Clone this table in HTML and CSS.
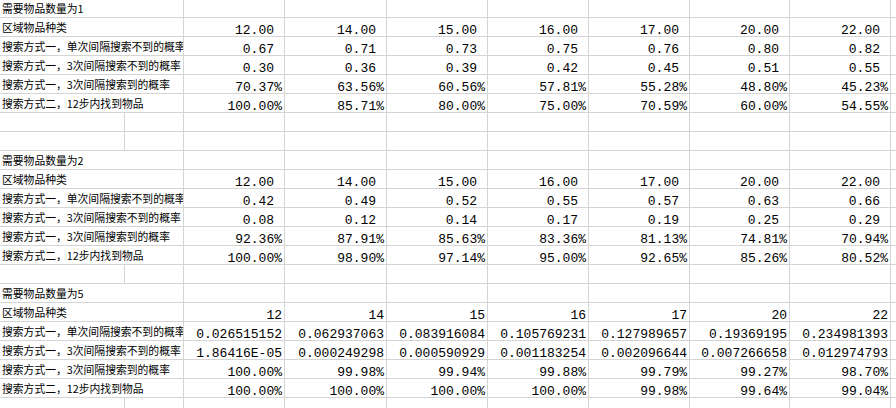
FILE: index.html
```html
<!DOCTYPE html>
<html lang="zh">
<head>
<meta charset="utf-8">
<title>Sheet</title>
<link rel="stylesheet" href="styles.css">
</head>
<body>
<div class="sheet">
  <div class="row"><div class="lbl">需要物品数量为1</div><div class="c"></div><div class="c"></div><div class="c"></div><div class="c"></div><div class="c"></div><div class="c"></div><div class="c"></div><div class="c"></div></div>
  <div class="row"><div class="lbl">区域物品种类</div><div class="c n f">12.00</div><div class="c n f">14.00</div><div class="c n f">15.00</div><div class="c n f">16.00</div><div class="c n f">17.00</div><div class="c n f">20.00</div><div class="c n f">22.00</div><div class="c"></div></div>
  <div class="row"><div class="lbl">搜索方式一，单次间隔搜索不到的概率</div><div class="c n f">0.67</div><div class="c n f">0.71</div><div class="c n f">0.73</div><div class="c n f">0.75</div><div class="c n f">0.76</div><div class="c n f">0.80</div><div class="c n f">0.82</div><div class="c"></div></div>
  <div class="row"><div class="lbl">搜索方式一，3次间隔搜索不到的概率</div><div class="c n f">0.30</div><div class="c n f">0.36</div><div class="c n f">0.39</div><div class="c n f">0.42</div><div class="c n f">0.45</div><div class="c n f">0.51</div><div class="c n f">0.55</div><div class="c"></div></div>
  <div class="row"><div class="lbl">搜索方式一，3次间隔搜索到的概率</div><div class="c n">70.37%</div><div class="c n">63.56%</div><div class="c n">60.56%</div><div class="c n">57.81%</div><div class="c n">55.28%</div><div class="c n">48.80%</div><div class="c n">45.23%</div><div class="c"></div></div>
  <div class="row"><div class="lbl">搜索方式二，12步内找到物品</div><div class="c n">100.00%</div><div class="c n">85.71%</div><div class="c n">80.00%</div><div class="c n">75.00%</div><div class="c n">70.59%</div><div class="c n">60.00%</div><div class="c n">54.55%</div><div class="c"></div></div>
  <div class="row"><div class="c"></div><div class="c"></div><div class="c"></div><div class="c"></div><div class="c"></div><div class="c"></div><div class="c"></div><div class="c"></div><div class="c"></div><div class="c"></div></div>
  <div class="row"><div class="c"></div><div class="c"></div><div class="c"></div><div class="c"></div><div class="c"></div><div class="c"></div><div class="c"></div><div class="c"></div><div class="c"></div><div class="c"></div></div>

  <div class="row"><div class="lbl">需要物品数量为2</div><div class="c"></div><div class="c"></div><div class="c"></div><div class="c"></div><div class="c"></div><div class="c"></div><div class="c"></div><div class="c"></div></div>
  <div class="row"><div class="lbl">区域物品种类</div><div class="c n f">12.00</div><div class="c n f">14.00</div><div class="c n f">15.00</div><div class="c n f">16.00</div><div class="c n f">17.00</div><div class="c n f">20.00</div><div class="c n f">22.00</div><div class="c"></div></div>
  <div class="row"><div class="lbl">搜索方式一，单次间隔搜索不到的概率</div><div class="c n f">0.42</div><div class="c n f">0.49</div><div class="c n f">0.52</div><div class="c n f">0.55</div><div class="c n f">0.57</div><div class="c n f">0.63</div><div class="c n f">0.66</div><div class="c"></div></div>
  <div class="row"><div class="lbl">搜索方式一，3次间隔搜索不到的概率</div><div class="c n f">0.08</div><div class="c n f">0.12</div><div class="c n f">0.14</div><div class="c n f">0.17</div><div class="c n f">0.19</div><div class="c n f">0.25</div><div class="c n f">0.29</div><div class="c"></div></div>
  <div class="row"><div class="lbl">搜索方式一，3次间隔搜索到的概率</div><div class="c n">92.36%</div><div class="c n">87.91%</div><div class="c n">85.63%</div><div class="c n">83.36%</div><div class="c n">81.13%</div><div class="c n">74.81%</div><div class="c n">70.94%</div><div class="c"></div></div>
  <div class="row"><div class="lbl">搜索方式二，12步内找到物品</div><div class="c n">100.00%</div><div class="c n">98.90%</div><div class="c n">97.14%</div><div class="c n">95.00%</div><div class="c n">92.65%</div><div class="c n">85.26%</div><div class="c n">80.52%</div><div class="c"></div></div>
  <div class="row"><div class="c"></div><div class="c"></div><div class="c"></div><div class="c"></div><div class="c"></div><div class="c"></div><div class="c"></div><div class="c"></div><div class="c"></div><div class="c"></div></div>

  <div class="row"><div class="lbl">需要物品数量为5</div><div class="c"></div><div class="c"></div><div class="c"></div><div class="c"></div><div class="c"></div><div class="c"></div><div class="c"></div><div class="c"></div></div>
  <div class="row"><div class="lbl">区域物品种类</div><div class="c n">12</div><div class="c n">14</div><div class="c n">15</div><div class="c n">16</div><div class="c n">17</div><div class="c n">20</div><div class="c n">22</div><div class="c"></div></div>
  <div class="row"><div class="lbl">搜索方式一，单次间隔搜索不到的概率</div><div class="c n">0.026515152</div><div class="c n">0.062937063</div><div class="c n">0.083916084</div><div class="c n">0.105769231</div><div class="c n">0.127989657</div><div class="c n">0.19369195</div><div class="c n">0.234981393</div><div class="c"></div></div>
  <div class="row"><div class="lbl">搜索方式一，3次间隔搜索不到的概率</div><div class="c n">1.86416E-05</div><div class="c n">0.000249298</div><div class="c n">0.000590929</div><div class="c n">0.001183254</div><div class="c n">0.002096644</div><div class="c n">0.007266658</div><div class="c n">0.012974793</div><div class="c"></div></div>
  <div class="row"><div class="lbl">搜索方式一，3次间隔搜索到的概率</div><div class="c n">100.00%</div><div class="c n">99.98%</div><div class="c n">99.94%</div><div class="c n">99.88%</div><div class="c n">99.79%</div><div class="c n">99.27%</div><div class="c n">98.70%</div><div class="c"></div></div>
  <div class="row"><div class="lbl">搜索方式二，12步内找到物品</div><div class="c n">100.00%</div><div class="c n">100.00%</div><div class="c n">100.00%</div><div class="c n">100.00%</div><div class="c n">99.98%</div><div class="c n">99.64%</div><div class="c n">99.04%</div><div class="c"></div></div>
  <div class="row"><div class="c"></div><div class="c"></div><div class="c"></div><div class="c"></div><div class="c"></div><div class="c"></div><div class="c"></div><div class="c"></div><div class="c"></div><div class="c"></div></div>
</div>
</body>
</html>
```

FILE: styles.css
```css
html, body {
  margin: 0;
  padding: 0;
  background: #ffffff;
  overflow: hidden;
}

.sheet {
  margin-top: -1px;
  width: 1000px;
  color: #000000;
}

.row {
  display: grid;
  grid-template-columns: 125px 59px 101px 102px 101px 101px 101px 100px 101px 1fr;
  height: 19px;
}

.c, .lbl {
  box-sizing: border-box;
  height: 19px;
  border-right: 1px solid #d4d4d4;
  border-bottom: 1px solid #d4d4d4;
  overflow: hidden;
  white-space: nowrap;
}

.lbl {
  grid-column: span 2;
  padding-left: 2px;
  font-family: "Noto Sans CJK SC", "Liberation Sans", sans-serif;
  font-size: 10.8px;
  line-height: 18px;
}

.n {
  display: flex;
  justify-content: flex-end;
  align-items: flex-end;
  padding-right: 2px;
  font-family: "Liberation Mono", "DejaVu Sans Mono", monospace;
  font-size: 13px;
  line-height: 11px;
}

.n.f {
  padding-right: 10px;
}
```
